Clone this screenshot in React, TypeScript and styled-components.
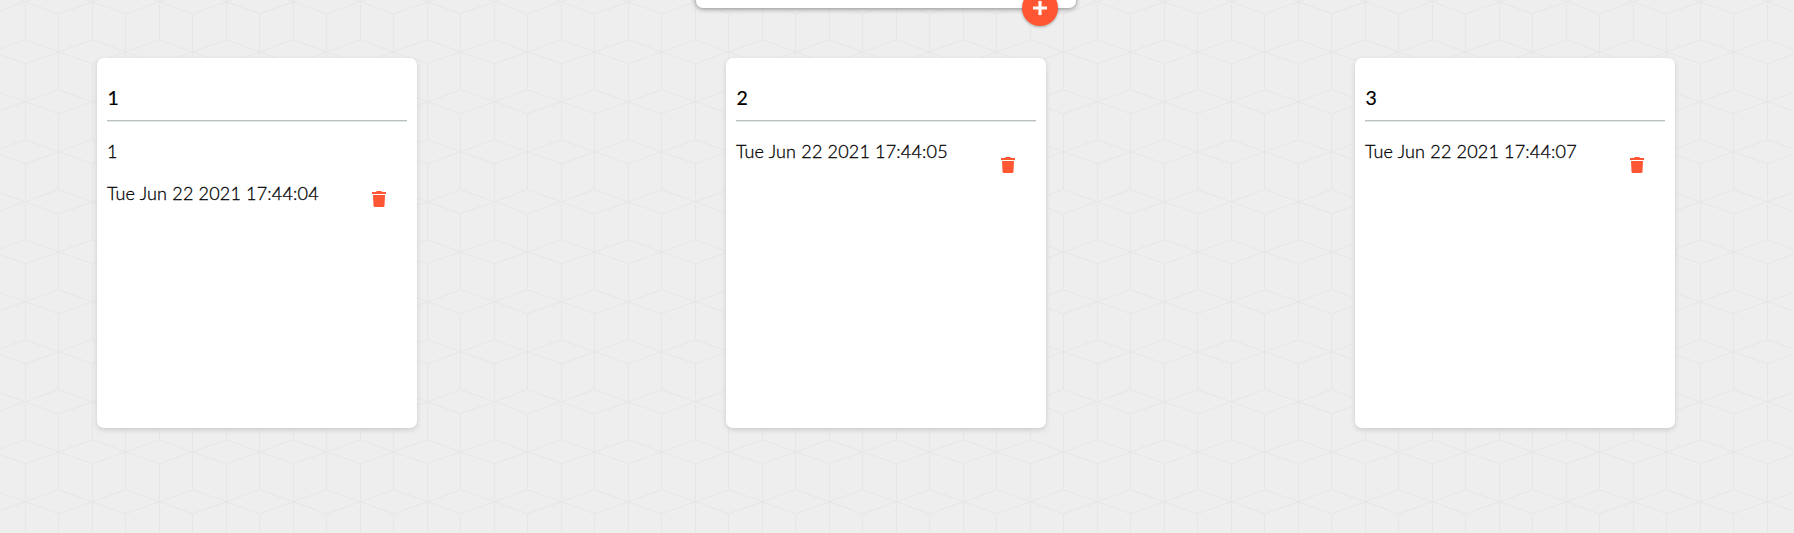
import * as React from 'react';
import styled, { createGlobalStyle } from 'styled-components';

const colors = {
    accent: '#ff5733',
    background: '#eee',
    pattern: '#e6e6e6',
    divider: '#b8c0c0',
};

// one 67x100 tile of the cube pattern
const tile = `<svg xmlns="http://www.w3.org/2000/svg" width="67" height="100"><g fill="none" stroke="${colors.pattern}"><path d="M25.5 -36.2V39.7M25.5 63.7V139.7M58.5 -86.2V-10.2M58.5 13.8V89.7"/><path d="M-8.5 51.8L25.5 39.7L58.5 51.8L25.5 63.7ZM58.5 51.8L92.5 39.7M58.5 51.8L92.5 63.7M25.5 1.8L58.5 -10.2M25.5 1.8L58.5 13.8L92.5 1.8M25.5 1.8L-8.5 13.8M25.5 1.8L-8.5 -10.2M25.5 101.8L58.5 89.7L92.5 101.8M25.5 101.8L-8.5 89.7"/></g></svg>`;

const GlobalStyle = createGlobalStyle`
    * {
        box-sizing: border-box;
    }

    body {
        margin: 0;
        height: 100vh;
        overflow: hidden;
        font-family: 'Lato', sans-serif;
        color: black;
        background: ${colors.background} url('data:image/svg+xml,${encodeURIComponent(tile)}');
    }
`;

const StyledPage = styled.div`
    width: 1772px;
    height: 100vh;
    overflow: hidden;
    display: flex;
    flex-direction: column;
    align-items: center;
`;

const StyledForm = styled.form`
    position: relative;
    flex: none;
    width: 380px;
    height: 60px;
    margin-top: -52px;
    background-color: white;
    border-radius: 7px;
    box-shadow: 0 1px 5px rgb(138, 137, 137);
`;

const StyledAddButton = styled.button`
    position: absolute;
    right: 18px;
    bottom: -18px;
    width: 36px;
    height: 36px;
    padding: 0;
    display: flex;
    justify-content: center;
    align-items: center;
    border: none;
    border-radius: 50%;
    background-color: ${colors.accent};
    box-shadow: 0 1px 3px rgba(0, 0, 0, 0.3);
`;

const StyledNotes = styled.div`
    display: flex;
    gap: 309px;
    margin-top: 50px;
`;

const StyledNote = styled.div`
    width: 320px;
    height: 370px;
    padding: 10px;
    background-color: white;
    border-radius: 7px;
    box-shadow: 0 2px 5px #ccc;
`;

const StyledTitle = styled.h1`
    height: 52px;
    margin: 0;
    padding: 18px 0 0 0.5px;
    font-size: 19.5px;
    line-height: 24px;
    font-weight: 400;
    -webkit-text-stroke: 0.2px black;
`;

const StyledDivider = styled.div`
    height: 2px;
    border-top: 1px solid ${colors.divider};
    border-bottom: 1px solid #e3e6e6;
`;

const StyledText = styled.p`
    height: 24px;
    margin: 17px 0 0;
    font-size: 18px;
    line-height: 24px;
    font-weight: 300;
    letter-spacing: 0.18px;
    white-space: nowrap;
    -webkit-text-stroke: 0.3px black;
`;

const StyledFooter = styled.div<{ $lifted?: boolean }>`
    display: flex;
    justify-content: space-between;
    padding-right: 21px;
    margin-top: ${({ $lifted }) => ($lifted ? 18 : 17)}px;

    p {
        margin: 0;
    }

    button {
        flex: none;
        width: 14px;
        height: 16px;
        margin-top: ${({ $lifted }) => ($lifted ? 10 : 18)}px;
        padding: 0;
        border: none;
        background: none;
    }

    svg {
        display: block;
    }
`;

const AddIcon = () => (
    <svg width="24" height="24" viewBox="0 0 24 24" fill="white">
        <path d="M19 13.6h-5.4V19h-3.2v-5.4H5v-3.2h5.4V5h3.2v5.4H19z" />
    </svg>
);

const TrashIcon = () => (
    <svg width="14" height="16" viewBox="0 0 14 16" fill={colors.accent}>
        <path d="M0 1h4l.7-1h4.6l.7 1h4v2H0z" />
        <path d="M1 4h12l-.5 10.5a1.5 1.5 0 0 1-1.5 1.5H3a1.5 1.5 0 0 1-1.5-1.5z" />
    </svg>
);

interface NoteProps {
    title: string;
    content?: string;
    date: string;
}

const Note: React.FunctionComponent<NoteProps> = ({ title, content, date }) => (
    <StyledNote>
        <StyledTitle>{title}</StyledTitle>
        <StyledDivider />
        {content && <StyledText>{content}</StyledText>}
        <StyledFooter $lifted={!!content}>
            <StyledText>{date}</StyledText>
            <button type="button" aria-label="Delete">
                <TrashIcon />
            </button>
        </StyledFooter>
    </StyledNote>
);

const notes: NoteProps[] = [
    { title: '1', content: '1', date: 'Tue Jun 22 2021 17:44:04' },
    { title: '2', date: 'Tue Jun 22 2021 17:44:05' },
    { title: '3', date: 'Tue Jun 22 2021 17:44:07' },
];

const App: React.FunctionComponent<{}> = () => {
    return (
        <StyledPage>
            <GlobalStyle />
            <StyledForm>
                <StyledAddButton type="button" aria-label="Add">
                    <AddIcon />
                </StyledAddButton>
            </StyledForm>
            <StyledNotes>
                {notes.map((note) => (
                    <Note key={note.title} {...note} />
                ))}
            </StyledNotes>
        </StyledPage>
    );
};

export default App;
